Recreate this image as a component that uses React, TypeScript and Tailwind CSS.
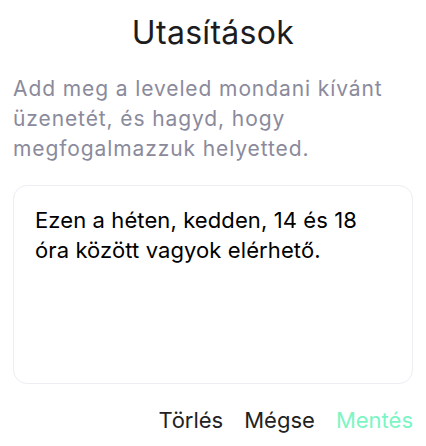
export default function App() {
  return (
    <div className="flex h-[446px] w-[426px] flex-col bg-white px-[13px] font-['Inter',sans-serif]">
      <h1 className="pt-[12px] text-center text-[32px] leading-[42px] font-normal tracking-[0.3px] text-[#1c1c1e]">
        Utasítások
      </h1>
      <p className="mt-[20px] text-[21px] leading-[30px] tracking-[0.9px] text-[#8a8a9c]">
        Add meg a leveled mondani kívánt üzenetét, és hagyd, hogy megfogalmazzuk helyetted.
      </p>
      <div className="mt-[21px] h-[199px] rounded-[14px] border border-[#ededf3] px-[21px] pt-[19px]">
        <p className="text-[22px] leading-[30px] tracking-[0.1px] text-black">
          Ezen a héten, kedden, 14 és 18 óra között vagyok elérhető.
        </p>
      </div>
      <div className="mt-[22px] flex justify-end gap-[21px] text-[22px] leading-[28px]">
        <button className="text-[#222222]">Törlés</button>
        <button className="text-[#222222]">Mégse</button>
        <button className="text-[#7cf5c4]">Mentés</button>
      </div>
    </div>
  );
}
